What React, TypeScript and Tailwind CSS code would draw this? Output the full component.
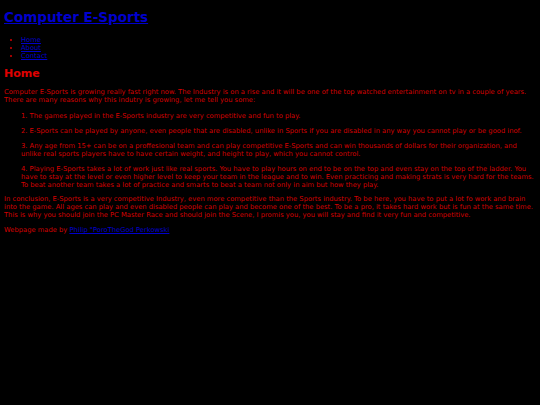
export default function App() {
  const font = { fontFamily: '"DejaVu Sans", Verdana, sans-serif' }
  return (
    <div className="min-h-[405px] w-full bg-black px-[4px] py-[4px] text-[6.75px] leading-[8px] text-[#d40000]" style={font}>
      <h1 className="mt-[5px] text-[13.5px] font-bold leading-[17px]">
        <a href="#" className="text-[#0000cc] underline">Computer E-Sports</a>
      </h1>
      <ul className="mt-[10px] list-disc pl-[17px]">
        <li><a href="#" className="text-[#0000cc] underline">Home</a></li>
        <li><a href="#" className="text-[#0000cc] underline">About</a></li>
        <li><a href="#" className="text-[#0000cc] underline">Contact</a></li>
      </ul>
      <h2 className="mt-[7px] text-[11px] font-bold leading-[13px] text-[#e00000]">Home</h2>
      <p className="mt-[8px]">
        Computer E-Sports is growing really fast right now. The Industry is on a rise and it will be one of the top watched entertainment on tv in a couple of years. There are many reasons why this indutry is growing, let me tell you some:
      </p>
      <div className="mt-[8px] flex flex-col gap-[7px] pl-[17px]">
        <p>1. The games played in the E-Sports industry are very competitive and fun to play.</p>
        <p>2. E-Sports can be played by anyone, even people that are disabled, unlike in Sports if you are disabled in any way you cannot play or be good inof.</p>
        <p>3. Any age from 15+ can be on a proffesional team and can play competitive E-Sports and can win thousands of dollars for their organization, and unlike real sports players have to have certain weight, and height to play, which you cannot control.</p>
        <p>4. Playing E-Sports takes a lot of work just like real sports. You have to play hours on end to be on the top and even stay on the top of the ladder. You have to stay at the level or even higher level to keep your team in the league and to win. Even practicing and making strats is very hard for the teams. To beat another team takes a lot of practice and smarts to beat a team not only in aim but how they play.</p>
      </div>
      <p className="mt-[6px]">
        In conclusion, E-Sports is a very competitive Industry, even more competitive than the Sports industry. To be here, you have to put a lot fo work and brain into the game. All ages can play and even disabled people can play and become one of the best. To be a pro, it takes hard work but is fun at the same time. This is why you should join the PC Master Race and should join the Scene, I promis you, you will stay and find it very fun and competitive.
      </p>
      <p className="mt-[7px]">
        Webpage made by <a href="#" className="text-[#0000cc] underline">Philip "PoroTheGod Perkowski</a>
      </p>
    </div>
  )
}
